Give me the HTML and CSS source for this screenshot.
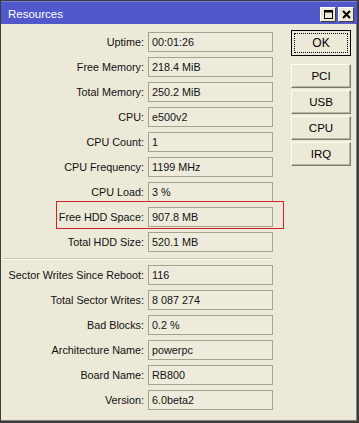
FILE: index.html
```html
<!DOCTYPE html>
<html>
<head>
<meta charset="utf-8">
<link rel="stylesheet" href="styles.css">
</head>
<body>
<div class="window">
  <div class="titlebar">
    <span class="title">Resources</span>
    <div class="tb-buttons">
      <span class="tb-btn"><svg width="11" height="11" viewBox="0 0 11 11"><rect x="1.5" y="1.5" width="8" height="8" fill="none" stroke="#000" stroke-width="1"/><line x1="1" y1="2.5" x2="10" y2="2.5" stroke="#000" stroke-width="2"/></svg></span>
      <span class="tb-btn"><svg width="11" height="11" viewBox="0 0 11 11"><path d="M2 2 L9 9 M9 2 L2 9" stroke="#000" stroke-width="2"/></svg></span>
    </div>
  </div>
  <div class="content">
    <div class="fields">
      <div class="grid">
        <label>Uptime:</label><div class="field">00:01:26</div>
        <label>Free Memory:</label><div class="field">218.4 MiB</div>
        <label>Total Memory:</label><div class="field">250.2 MiB</div>
        <label>CPU:</label><div class="field">e500v2</div>
        <label>CPU Count:</label><div class="field">1</div>
        <label>CPU Frequency:</label><div class="field">1199 MHz</div>
        <label>CPU Load:</label><div class="field">3 %</div>
        <label>Free HDD Space:</label><div class="field">907.8 MB</div>
        <label>Total HDD Size:</label><div class="field">520.1 MB</div>
      </div>
      <div class="separator"></div>
      <div class="grid">
        <label>Sector Writes Since Reboot:</label><div class="field">116</div>
        <label>Total Sector Writes:</label><div class="field">8 087 274</div>
        <label>Bad Blocks:</label><div class="field">0.2 %</div>
        <label>Architecture Name:</label><div class="field">powerpc</div>
        <label>Board Name:</label><div class="field">RB800</div>
        <label>Version:</label><div class="field">6.0beta2</div>
      </div>
    </div>
    <div class="buttons">
      <button class="btn ok"><span>OK</span></button>
      <button class="btn">PCI</button>
      <button class="btn">USB</button>
      <button class="btn">CPU</button>
      <button class="btn">IRQ</button>
    </div>
    <div class="highlight"></div>
  </div>
</div>
</body>
</html>
```
FILE: styles.css
```css
* { box-sizing: border-box; }
html, body { margin: 0; padding: 0; background: #ece9d8; }
body { font-family: "Liberation Sans", Arial, sans-serif; font-size: 10.8px; color: #111; }

.window {
  width: 359px;
  height: 423px;
  background: #ece9d8;
  border: 1px solid #3c3c3c;
  border-right-width: 2px;
  border-bottom-width: 2px;
  box-shadow: inset -1px -1px 0 #808080;
  position: relative;
}

.titlebar {
  height: 23px;
  background: #5158c9;
  border-top: 1px solid #7a80dc;
  display: flex;
  align-items: center;
  justify-content: space-between;
  padding: 0 3px 0 7px;
}
.title { color: #fff; font-size: 11.5px; padding-top: 1px; }
.tb-buttons { display: flex; gap: 2px; padding-top: 2px; }
.tb-btn {
  width: 16px; height: 15px;
  background: #ece9d8;
  border: 1px solid;
  border-color: #fff #404040 #404040 #fff;
  display: flex; align-items: center; justify-content: center;
}

.content {
  display: flex;
  padding: 8px 0 0 0;
  position: relative;
}

.fields { width: 272px; }

.grid {
  display: grid;
  grid-template-columns: 143px 125px;
  column-gap: 4px;
  row-gap: 5px;
}
.grid label {
  text-align: right;
  line-height: 20px;
  white-space: nowrap;
}
.field {
  height: 20px;
  border: 1px solid #a5a28f;
  background: #eeebdc;
  line-height: 18px;
  padding-left: 3px;
  white-space: nowrap;
}

.separator {
  margin: 6px 0 5px 2px;
  height: 2px;
  border-top: 1px solid #c9c6b4;
  border-bottom: 1px solid #fbfaf5;
}

.buttons {
  display: flex;
  flex-direction: column;
  gap: 2px;
  margin-left: 18px;
  margin-top: -2px;
}
.btn {
  width: 60px;
  height: 24px;
  font-family: "Liberation Sans", Arial, sans-serif;
  font-size: 11.5px;
  background: #ece9d8;
  border: 1px solid;
  border-color: #fdfcf7 #7d7a6a #7d7a6a #fdfcf7;
  box-shadow: inset -1px -1px 0 #b8b5a4;
  padding: 0;
  color: #000;
}
.btn.ok {
  height: 26px;
  border: 1px solid #000;
  box-shadow: none;
  padding: 2px;
  margin-bottom: 6px;
}
.btn.ok span {
  display: flex;
  align-items: center;
  justify-content: center;
  height: 100%;
  border: 1px dotted #000;
  font-size: 12px;
}

.highlight {
  position: absolute;
  left: 55px;
  top: 177px;
  width: 228px;
  height: 28px;
  border: 1px solid #d0202a;
  pointer-events: none;
}
```
